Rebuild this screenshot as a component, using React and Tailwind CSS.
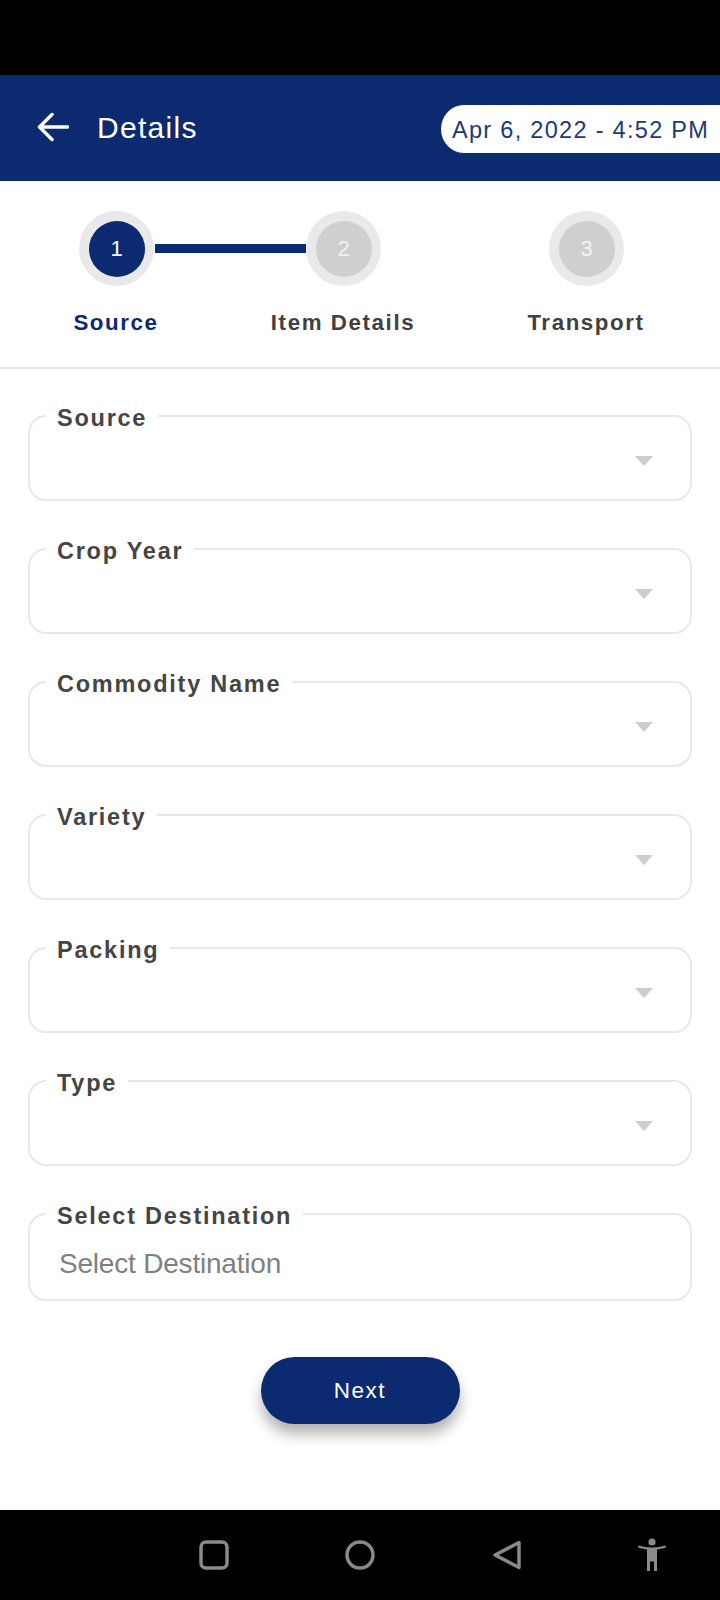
import React from 'react';

const fields = ['Source', 'Crop Year', 'Commodity Name', 'Variety', 'Packing', 'Type'];

const steps = [
  { label: 'Source', width: 'w-[232px]', color: 'text-[#0b2a6f]' },
  { label: 'Item Details', width: 'w-[222px]', color: 'text-[#404040]' },
  { label: 'Transport', width: 'w-[264px]', color: 'text-[#404040]' },
];

function StepCircle({ number, active }) {
  return (
    <div className="flex h-[75px] w-[75px] shrink-0 items-center justify-center rounded-full bg-[#e9e9e9]">
      <div
        className={`flex h-[56px] w-[56px] items-center justify-center rounded-full text-[22px] ${
          active ? 'bg-[#0b2a6f] text-white' : 'bg-[#cfcfcf] text-[#f2f2f2]'
        }`}
      >
        {number}
      </div>
    </div>
  );
}

function FieldLabel({ children }) {
  return (
    <span className="absolute left-[16px] top-[-14px] bg-white px-[11px] text-[23.500px] leading-[30px] font-bold tracking-[1.75px] whitespace-nowrap text-[#454545]">
      {children}
    </span>
  );
}

function SelectField({ label }) {
  return (
    <div className="relative flex h-[86px] items-center justify-end rounded-[18px] border-2 border-[#e8e8e8] pr-[36px]">
      <FieldLabel>{label}</FieldLabel>
      <svg width="20" height="12" viewBox="0 0 20 12" className="mt-[5px]">
        <path d="M1 1h18l-9 10z" fill="#cdcdcd" />
      </svg>
    </div>
  );
}

export default function App() {
  return (
    <div className="flex h-[1600px] w-[720px] flex-col overflow-hidden bg-white font-['Liberation_Sans',Arial,sans-serif]">
      <div className="h-[75px] shrink-0 bg-black" />

      <header className="flex h-[106px] shrink-0 items-center justify-between bg-[#0b2a6f] pl-[37px]">
        <div className="flex items-center gap-[28px] text-white">
          <svg width="32" height="30" viewBox="0 0 32 30" fill="none" className="mt-[-2px]">
            <path
              d="M30.500 15H3M15 2.500L2.500 15L15 27.500"
              stroke="currentColor"
              strokeWidth="3.400"
              strokeLinecap="round"
              strokeLinejoin="round"
            />
          </svg>
          <h1 className="mt-[-2px] text-[30px] font-normal tracking-[1.3px]">Details</h1>
        </div>
        <div className="mt-[2px] flex h-[50px] w-[281px] items-center rounded-l-[25px] border-y border-l-2 border-[#0b2a6f] bg-white pl-[11px] text-[23.500px] tracking-[1.3px] whitespace-nowrap text-[#1c3a78]">
          <span className="mt-[3px]">Apr 6, 2022 - 4:52 PM</span>
        </div>
      </header>

      <section className="h-[188px] shrink-0 border-b-2 border-[#e2e2e2]">
        <div className="flex items-center pt-[30px] pl-[79px]">
          <StepCircle number={1} active />
          <div className="ml-[1px] h-[9px] w-[151px] shrink-0 bg-[#0b2a6f]" />
          <StepCircle number={2} />
          <div className="w-[168px] shrink-0" />
          <StepCircle number={3} />
        </div>
        <div className="mt-[23px] flex">
          {steps.map((step) => (
            <div
              key={step.label}
              className={`${step.width} text-center text-[22.300px] leading-[28px] font-bold tracking-[1.6px] ${step.color}`}
            >
              {step.label}
            </div>
          ))}
        </div>
      </section>

      <main className="flex flex-col gap-[47px] px-[28px] pt-[46px]">
        {fields.map((field) => (
          <SelectField key={field} label={field} />
        ))}
        <div className="relative flex h-[88px] items-center rounded-[18px] border-2 border-[#e8e8e8] pl-[29px]">
          <FieldLabel>Select Destination</FieldLabel>
          <span className="mt-[13px] text-[28px] tracking-[-0.2px] text-[#808080]">Select Destination</span>
        </div>
      </main>

      <div className="mt-[56px] flex justify-center">
        <button
          type="button"
          className="h-[67px] w-[199px] rounded-full bg-[#0b2a6f] text-[22.500px] tracking-[1.5px] text-white shadow-[0_10px_14px_rgba(0,0,0,0.3)]"
        >
          Next
        </button>
      </div>

      <nav className="mt-auto flex h-[90px] shrink-0 items-center gap-[116px] bg-black pl-[199px]">
        <svg width="30" height="30" viewBox="0 0 30 30" fill="none">
          <rect x="2" y="2" width="26" height="26" rx="5" stroke="#8a8a8a" strokeWidth="3.500" />
        </svg>
        <svg width="30" height="30" viewBox="0 0 30 30" fill="none">
          <circle cx="15" cy="15" r="13" stroke="#8a8a8a" strokeWidth="3.500" />
        </svg>
        <svg width="30" height="30" viewBox="0 0 30 30" fill="none" className="ml-[1px]">
          <path d="M27 2.500v25L3 15z" stroke="#8a8a8a" strokeWidth="3.500" strokeLinejoin="round" />
        </svg>
        <svg width="30" height="34" viewBox="0 0 30 34" className="ml-[-1px]">
          <circle cx="15" cy="4" r="3.600" fill="#8a8a8a" />
          <path
            d="M1 9.500l.6-2c4.500 1.300 8.900 2 13.400 2s8.900-.7 13.400-2l.6 2c-3.200 1-6.300 1.700-9 2V33h-3V23.500h-4V33h-3V11.500c-2.700-.3-5.800-1-9-2z"
            fill="#8a8a8a"
          />
        </svg>
      </nav>
    </div>
  );
}
